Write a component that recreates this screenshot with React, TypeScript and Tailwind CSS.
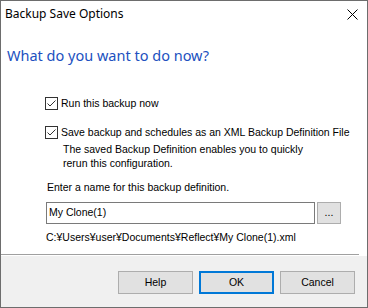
import React from "react";

function Check() {
  return (
    <div className="w-[13px] h-[13px] border border-[#333333] bg-white flex items-center justify-center shrink-0">
      <svg width="11" height="11" viewBox="0 0 11 11">
        <polyline points="1.5,5.5 4,8 9.5,2.5" fill="none" stroke="#333333" strokeWidth="1" />
      </svg>
    </div>
  );
}

export default function App() {
  const body = { fontFamily: '"Liberation Sans", Arial, sans-serif' };
  return (
    <div className="w-[368px] h-[308px] border border-[#6d6d6d] bg-white flex flex-col text-black" style={body}>
      <div className="h-[26px] flex items-center justify-between pl-[4px] pr-[9px] shrink-0">
        <span className="text-[12px]" style={{ fontFamily: '"Noto Sans", sans-serif' }}>Backup Save Options</span>
        <svg width="11" height="11" viewBox="0 0 11 11">
          <path d="M0.5 0.5 L10.5 10.5 M10.5 0.5 L0.5 10.5" stroke="#000" strokeWidth="1" />
        </svg>
      </div>
      <div className="flex-1 flex flex-col">
        <div className="mt-[17px] pl-[6px] text-[14.5px] leading-[22px] text-[#2150c0]" style={{ fontFamily: '"Noto Sans", sans-serif' }}>
          What do you want to do now?
        </div>
        <div className="pl-[44px] mt-[31px] flex flex-col text-[10.5px]">
          <div className="flex items-center gap-[3px] h-[13px]">
            <Check />
            <span>Run this backup now</span>
          </div>
          <div className="flex items-center gap-[3px] h-[13px] mt-[16px]">
            <Check />
            <span>Save backup and schedules as an XML Backup Definition File</span>
          </div>
          <div className="pl-[18px] mt-[3px] leading-[14px]">
            The saved Backup Definition enables you to quickly
            <br />
            rerun this configuration.
          </div>
        </div>
        <div className="pl-[46px] mt-[10px] text-[10.5px] leading-[14px]">Enter a name for this backup definition.</div>
        <div className="pl-[45px] mt-[8px] flex gap-[2px]">
          <div className="w-[269px] h-[22px] border border-[#7a7a7a] bg-white flex items-center pl-[2px] text-[10.5px]">
            My Clone(1)
          </div>
          <div className="w-[24px] h-[22px] border border-[#adadad] bg-[#e1e1e1] flex items-center justify-center text-[10.5px]">
            ...
          </div>
        </div>
        <div className="pl-[45px] mt-[6px] text-[10.5px] leading-[14px]">
          C:¥Users¥user¥Documents¥Reflect¥My Clone(1).xml
        </div>
      </div>
      <div className="h-[1px] bg-[#a0a0a0] mr-[8px] shrink-0" />
      <div className="h-[1px] bg-white shrink-0" />
      <div className="h-[51px] bg-[#f0f0f0] flex justify-end pr-[12px] pt-[15px] gap-[6px] shrink-0 text-[10.5px]">
        <div className="w-[75px] h-[23px] border border-[#adadad] bg-[#e1e1e1] flex items-center justify-center">Help</div>
        <div className="w-[75px] h-[23px] border-2 border-[#0078d7] bg-[#e1e1e1] flex items-center justify-center">OK</div>
        <div className="w-[75px] h-[23px] border border-[#adadad] bg-[#e1e1e1] flex items-center justify-center">Cancel</div>
      </div>
    </div>
  );
}
